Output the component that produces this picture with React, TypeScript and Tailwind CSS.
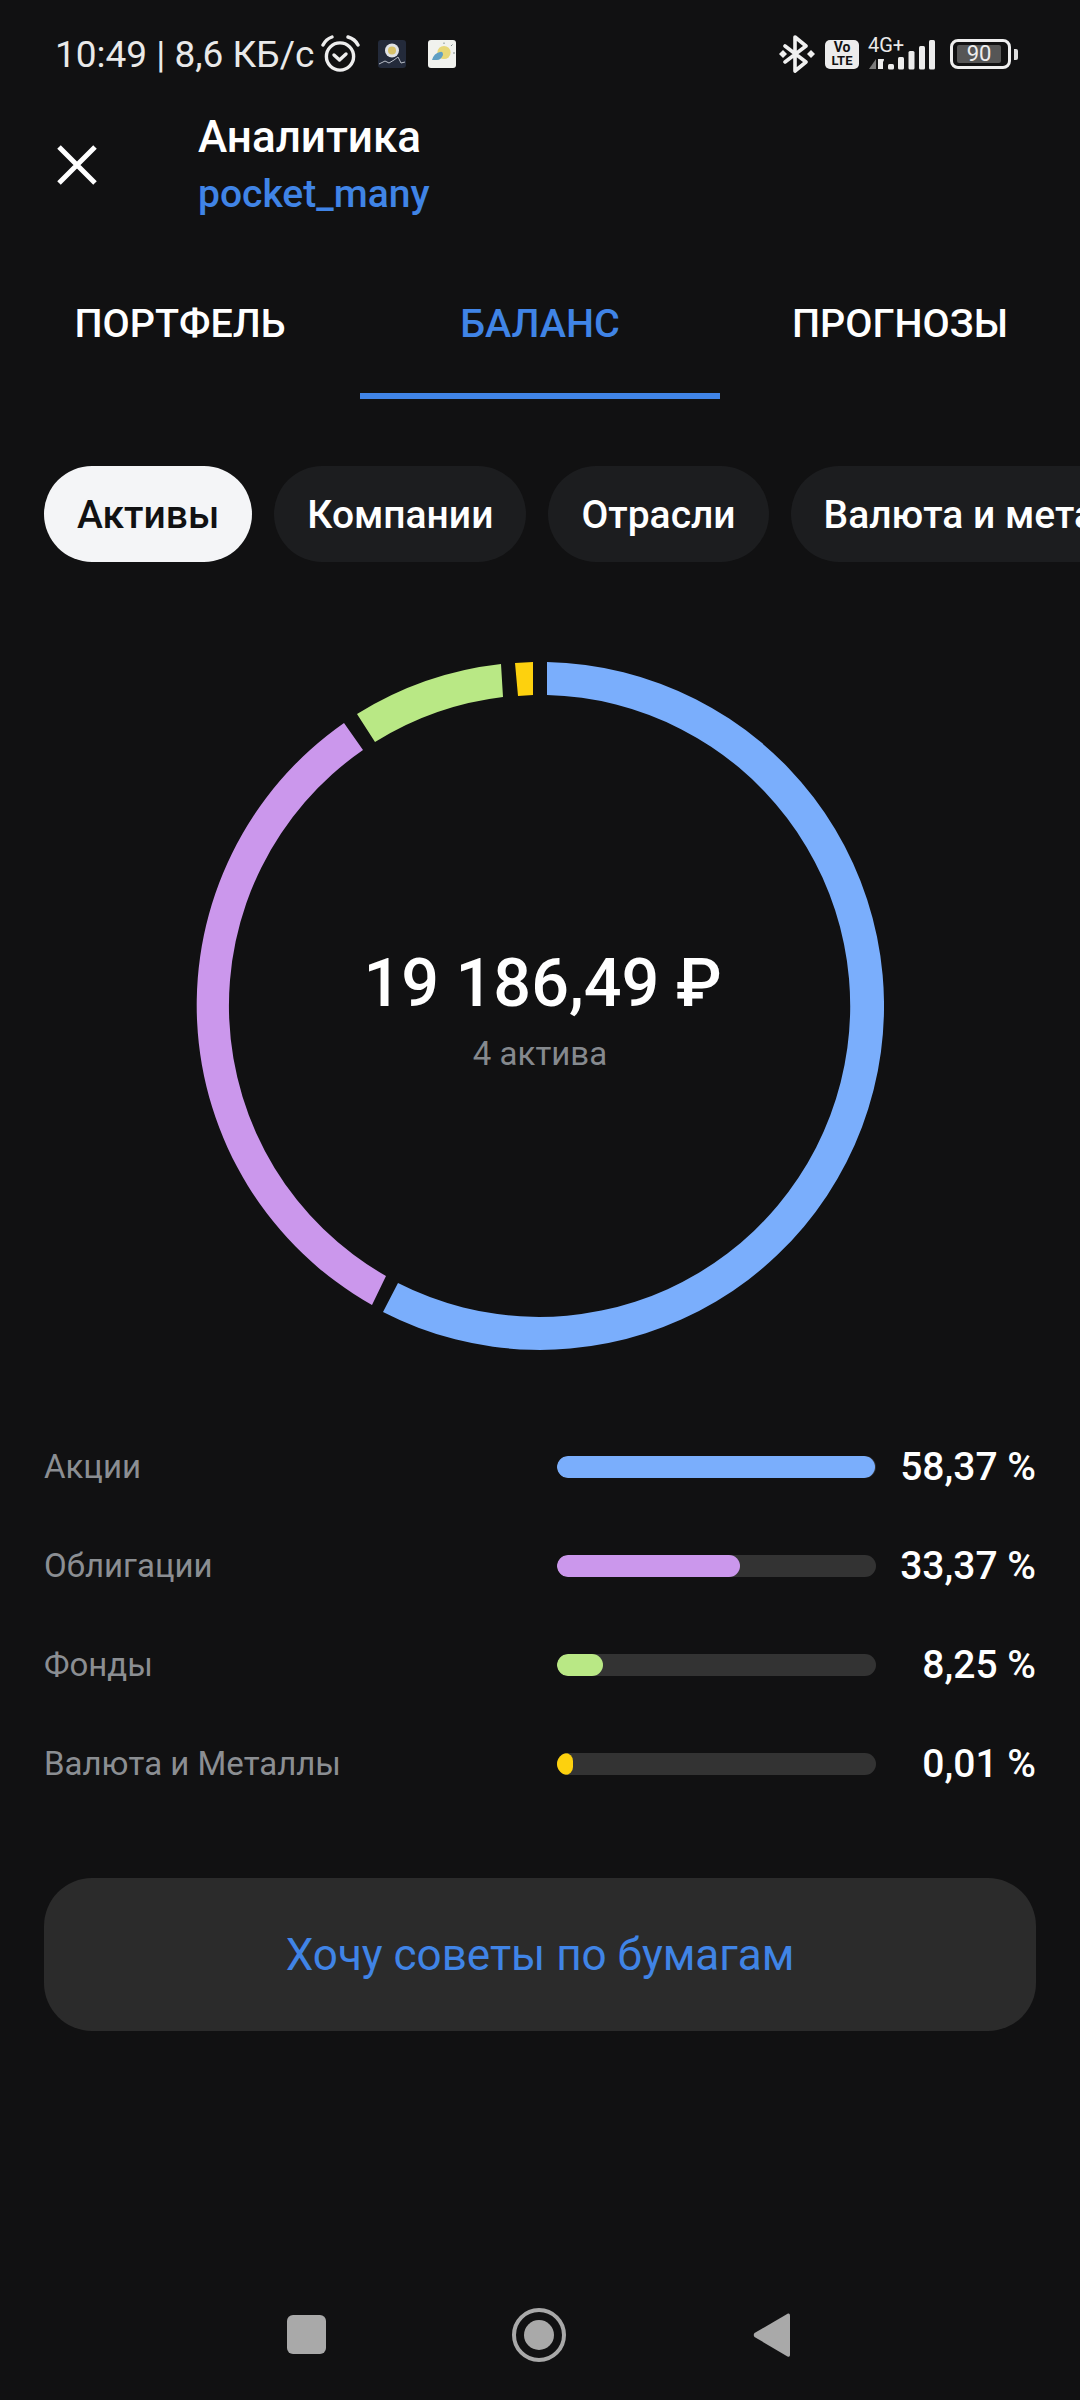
const rows = [
  { name: "Акции", value: "58,37 %", width: 318, color: "bg-[#7aaefc]" },
  { name: "Облигации", value: "33,37 %", width: 183, color: "bg-[#cb97ec]" },
  { name: "Фонды", value: "8,25 %", width: 46, color: "bg-[#b9e885]" },
  { name: "Валюта и Металлы", value: "0,01 %", width: 16, color: "bg-[#fdd10e]" },
];

const chips = ["Компании", "Отрасли", "Валюта и металлы"];

const StatusBar = () => (
  <div className="flex h-[108px] items-center pl-[55px] pr-[62px] text-[#e9e9e9]">
    <span className="text-[37px] leading-none whitespace-nowrap">10:49 | 8,6 КБ/с</span>
    {/* будильник */}
    <svg className="ml-[7px] h-[38px] w-[40px]" viewBox="322 36 40 38" fill="none" stroke="#eeeeee" strokeWidth="3.4" strokeLinecap="round" strokeLinejoin="round">
      <circle cx="341" cy="57.5" r="13.6" />
      <path d="M324 46 Q327 40 333 38" />
      <path d="M349 38 Q356 40 359 46" />
      <path d="M335 56 L340.5 61 L347 55" />
    </svg>
    {/* иконка приложения */}
    <svg className="ml-[17px] h-[28px] w-[28px]" viewBox="0 0 28 28">
      <rect width="28" height="28" rx="3" fill="#232a3a" />
      <circle cx="14" cy="10.5" r="7" fill="#dfe2e6" />
      <circle cx="14" cy="10.5" r="4" fill="#d8c26a" />
      <path d="M1 24 L7 21 L11 23 L16 20 L20 17 L23 23 L27 22" fill="none" stroke="#b9bec8" strokeWidth="1" />
    </svg>
    {/* погода */}
    <svg className="ml-[22px] h-[28px] w-[28px]" viewBox="0 0 28 28">
      <rect width="28" height="28" rx="3" fill="#f1f2ee" />
      <circle cx="16" cy="12.5" r="6.6" fill="#e7d777" />
      <path d="M4 20 Q6 13 12 12 Q15 11 15 15 Q13 20 9 20 Z" fill="#5f9fc4" />
      <path d="M25 13 H27 M23 6 L24.5 4.5 M16 2.5 V4" stroke="#7d8b8c" strokeWidth="1" />
    </svg>

    <div className="ml-auto flex items-center">
      {/* bluetooth */}
      <svg className="h-[38px] w-[36px]" viewBox="779 35 36 38" fill="none">
        <path d="M785 46 L806 62 L795 71 V37 L806 46 L785 62" stroke="#f0f0f0" strokeWidth="3.6" strokeLinejoin="round" strokeLinecap="round" />
        <path d="M779 54 L783 50 L787 54 L783 58 Z M807 54 L811 50 L815 54 L811 58 Z" fill="#f0f0f0" />
      </svg>
      <div className="ml-[10px] flex h-[29px] w-[34px] flex-col items-center justify-center rounded-[5px] bg-[#ececec] text-[#111112]">
        <span className="text-[14px] leading-[13px] font-bold">Vo</span>
        <span className="text-[13px] leading-[13px] font-bold">LTE</span>
      </div>
      <div className="relative ml-[9px] h-[31px] w-[68px]">
        <span className="absolute left-0 top-[-3px] text-[20px] leading-[18px]">4G+</span>
        <svg className="h-[31px] w-[68px]" viewBox="868 40 68 31" fill="#ececec">
          <path d="M876 60 V70 H869 Z" fill="#7b7b7b" />
          <path d="M878 70 V60 L884 60 Q884 62 883 63 V70 Z" />
          <rect x="888" y="65" width="6" height="5.5" rx="1.5" />
          <rect x="898" y="58" width="6" height="12.5" rx="1.5" />
          <rect x="908.500" y="52" width="6" height="18.500" rx="1.5" />
          <rect x="919" y="47" width="6" height="23.500" rx="1.5" />
          <rect x="929" y="41" width="6" height="29.500" rx="1.5" />
        </svg>
      </div>
      <div className="ml-[14px] flex items-center">
        <div className="flex h-[30px] w-[61px] items-center justify-start rounded-[8px] border-[3px] border-[#eeeeee] pl-[4px]">
          <div className="flex h-[18px] w-[44px] items-center justify-center rounded-[2px] bg-[#565656]">
            <span className="text-[22px] leading-none text-[#eeeeee]">90</span>
          </div>
        </div>
        <div className="ml-[3px] h-[11px] w-[4px] rounded-r-[2px] bg-[#dddddd]" />
      </div>
    </div>
  </div>
);

const Donut = () => (
  <div className="relative mx-auto mt-[100px] h-[688px] w-[688px]">
    <svg className="h-full w-full" viewBox="196 662 688 688">
      <path d="M547 662 A344 344 0 1 1 383 1312 L398 1283 A311 311 0 1 0 547 695 Z" fill="#7aaefc" />
      <path d="M372 1305 A344 344 0 0 1 344 723 L363 750 A311 311 0 0 0 386 1276 Z" fill="#cb97ec" />
      <path d="M357 714 A344 344 0 0 1 501 664 L503 697 A311 311 0 0 0 375 742 Z" fill="#b9e885" />
      <path d="M515 663 A344 344 0 0 1 533 662 L533 695 A311 311 0 0 0 518 696 Z" fill="#fdd10e" />
    </svg>
    <div className="absolute inset-0 flex flex-col items-center justify-center pt-[6px]">
      <span className="pl-[5px] text-[66.500px] leading-[76px] font-medium text-white">19 186,49 ₽</span>
      <span className="mt-[13px] text-[33px] leading-[40px] text-[#85898e]">4 актива</span>
    </div>
  </div>
);

const App = () => {
  return (
    <div className="flex h-[2400px] w-[1080px] flex-col overflow-hidden bg-[#111112] font-[Roboto,sans-serif]">
      <StatusBar />

      {/* Шапка */}
      <div className="flex items-center pl-[57px] pt-[4px]">
        <svg className="h-[40px] w-[40px]" viewBox="0 0 40 40" stroke="white" strokeWidth="5">
          <path d="M2 2 L38 38 M38 2 L2 38" />
        </svg>
        <div className="ml-[101px] flex flex-col">
          <span className="text-[44px] leading-[50px] font-medium text-white">Аналитика</span>
          <span className="mt-[9px] text-[39px] leading-[46px] font-medium text-[#4084e6]">pocket_many</span>
        </div>
      </div>

      {/* Вкладки */}
      <div className="mt-[33px] grid h-[149px] grid-cols-3">
        <div className="flex items-center justify-center border-b-[6px] border-transparent pt-[5px] text-[39.500px] font-medium text-white">ПОРТФЕЛЬ</div>
        <div className="flex items-center justify-center border-b-[6px] border-[#4084e6] pt-[5px] text-[39.500px] font-medium text-[#4084e6]">БАЛАНС</div>
        <div className="flex items-center justify-center border-b-[6px] border-transparent pt-[5px] text-[39.500px] font-medium text-white">ПРОГНОЗЫ</div>
      </div>

      {/* Чипы */}
      <div className="mt-[67px] flex gap-[22px] overflow-hidden pl-[44px]">
        <div className="flex h-[96px] shrink-0 items-center rounded-[48px] bg-[#f4f5f7] px-[33px] pt-[2px] text-[39px] font-medium text-[#111112]">Активы</div>
        {chips.map((chip) => (
          <div key={chip} className="flex h-[96px] shrink-0 items-center rounded-[48px] bg-[#1c1d1f] px-[33px] pt-[2px] text-[39px] font-medium whitespace-nowrap text-white">
            {chip}
          </div>
        ))}
      </div>

      <Donut />

      {/* Легенда */}
      <div className="mt-[106px] flex flex-col gap-[77px] px-[44px]">
        {rows.map((row) => (
          <div key={row.name} className="flex h-[22px] items-center">
            <span className="text-[33px] text-[#8b8e92]">{row.name}</span>
            <div className="ml-auto flex items-center">
              <div className="h-[22px] w-[319px] overflow-hidden rounded-[11px] bg-[#333333]">
                <div className={`h-full rounded-[11px] ${row.color}`} style={{ width: row.width }} />
              </div>
              <span className="w-[160px] text-right text-[39px] font-medium text-white">{row.value}</span>
            </div>
          </div>
        ))}
      </div>

      {/* Кнопка */}
      <div className="mx-[44px] mt-[103px] flex h-[153px] items-center justify-center rounded-[48px] bg-[#2b2b2b] text-[44px] text-[#4084e6]">
        Хочу советы по бумагам
      </div>

      {/* Навигация */}
      <div className="relative mt-auto h-[100px]">
        <div className="absolute left-[287px] top-[15px] h-[39px] w-[39px] rounded-[6px] bg-[#a9a9a9]" />
        <div className="absolute left-[512px] top-[8px] flex h-[54px] w-[54px] items-center justify-center rounded-full border-[4px] border-[#a9a9a9]">
          <div className="h-[30px] w-[30px] rounded-full bg-[#a9a9a9]" />
        </div>
        <svg className="absolute left-[753px] top-[12px] h-[46px] w-[37px]" viewBox="0 0 37 46">
          <path d="M35 1.500 Q37 1 37 3.500 V43 Q37 45.500 34.500 44.500 L1.500 25 Q0 23 1.500 21 Z" fill="#a9a9a9" />
        </svg>
      </div>
    </div>
  );
};

export default App;
